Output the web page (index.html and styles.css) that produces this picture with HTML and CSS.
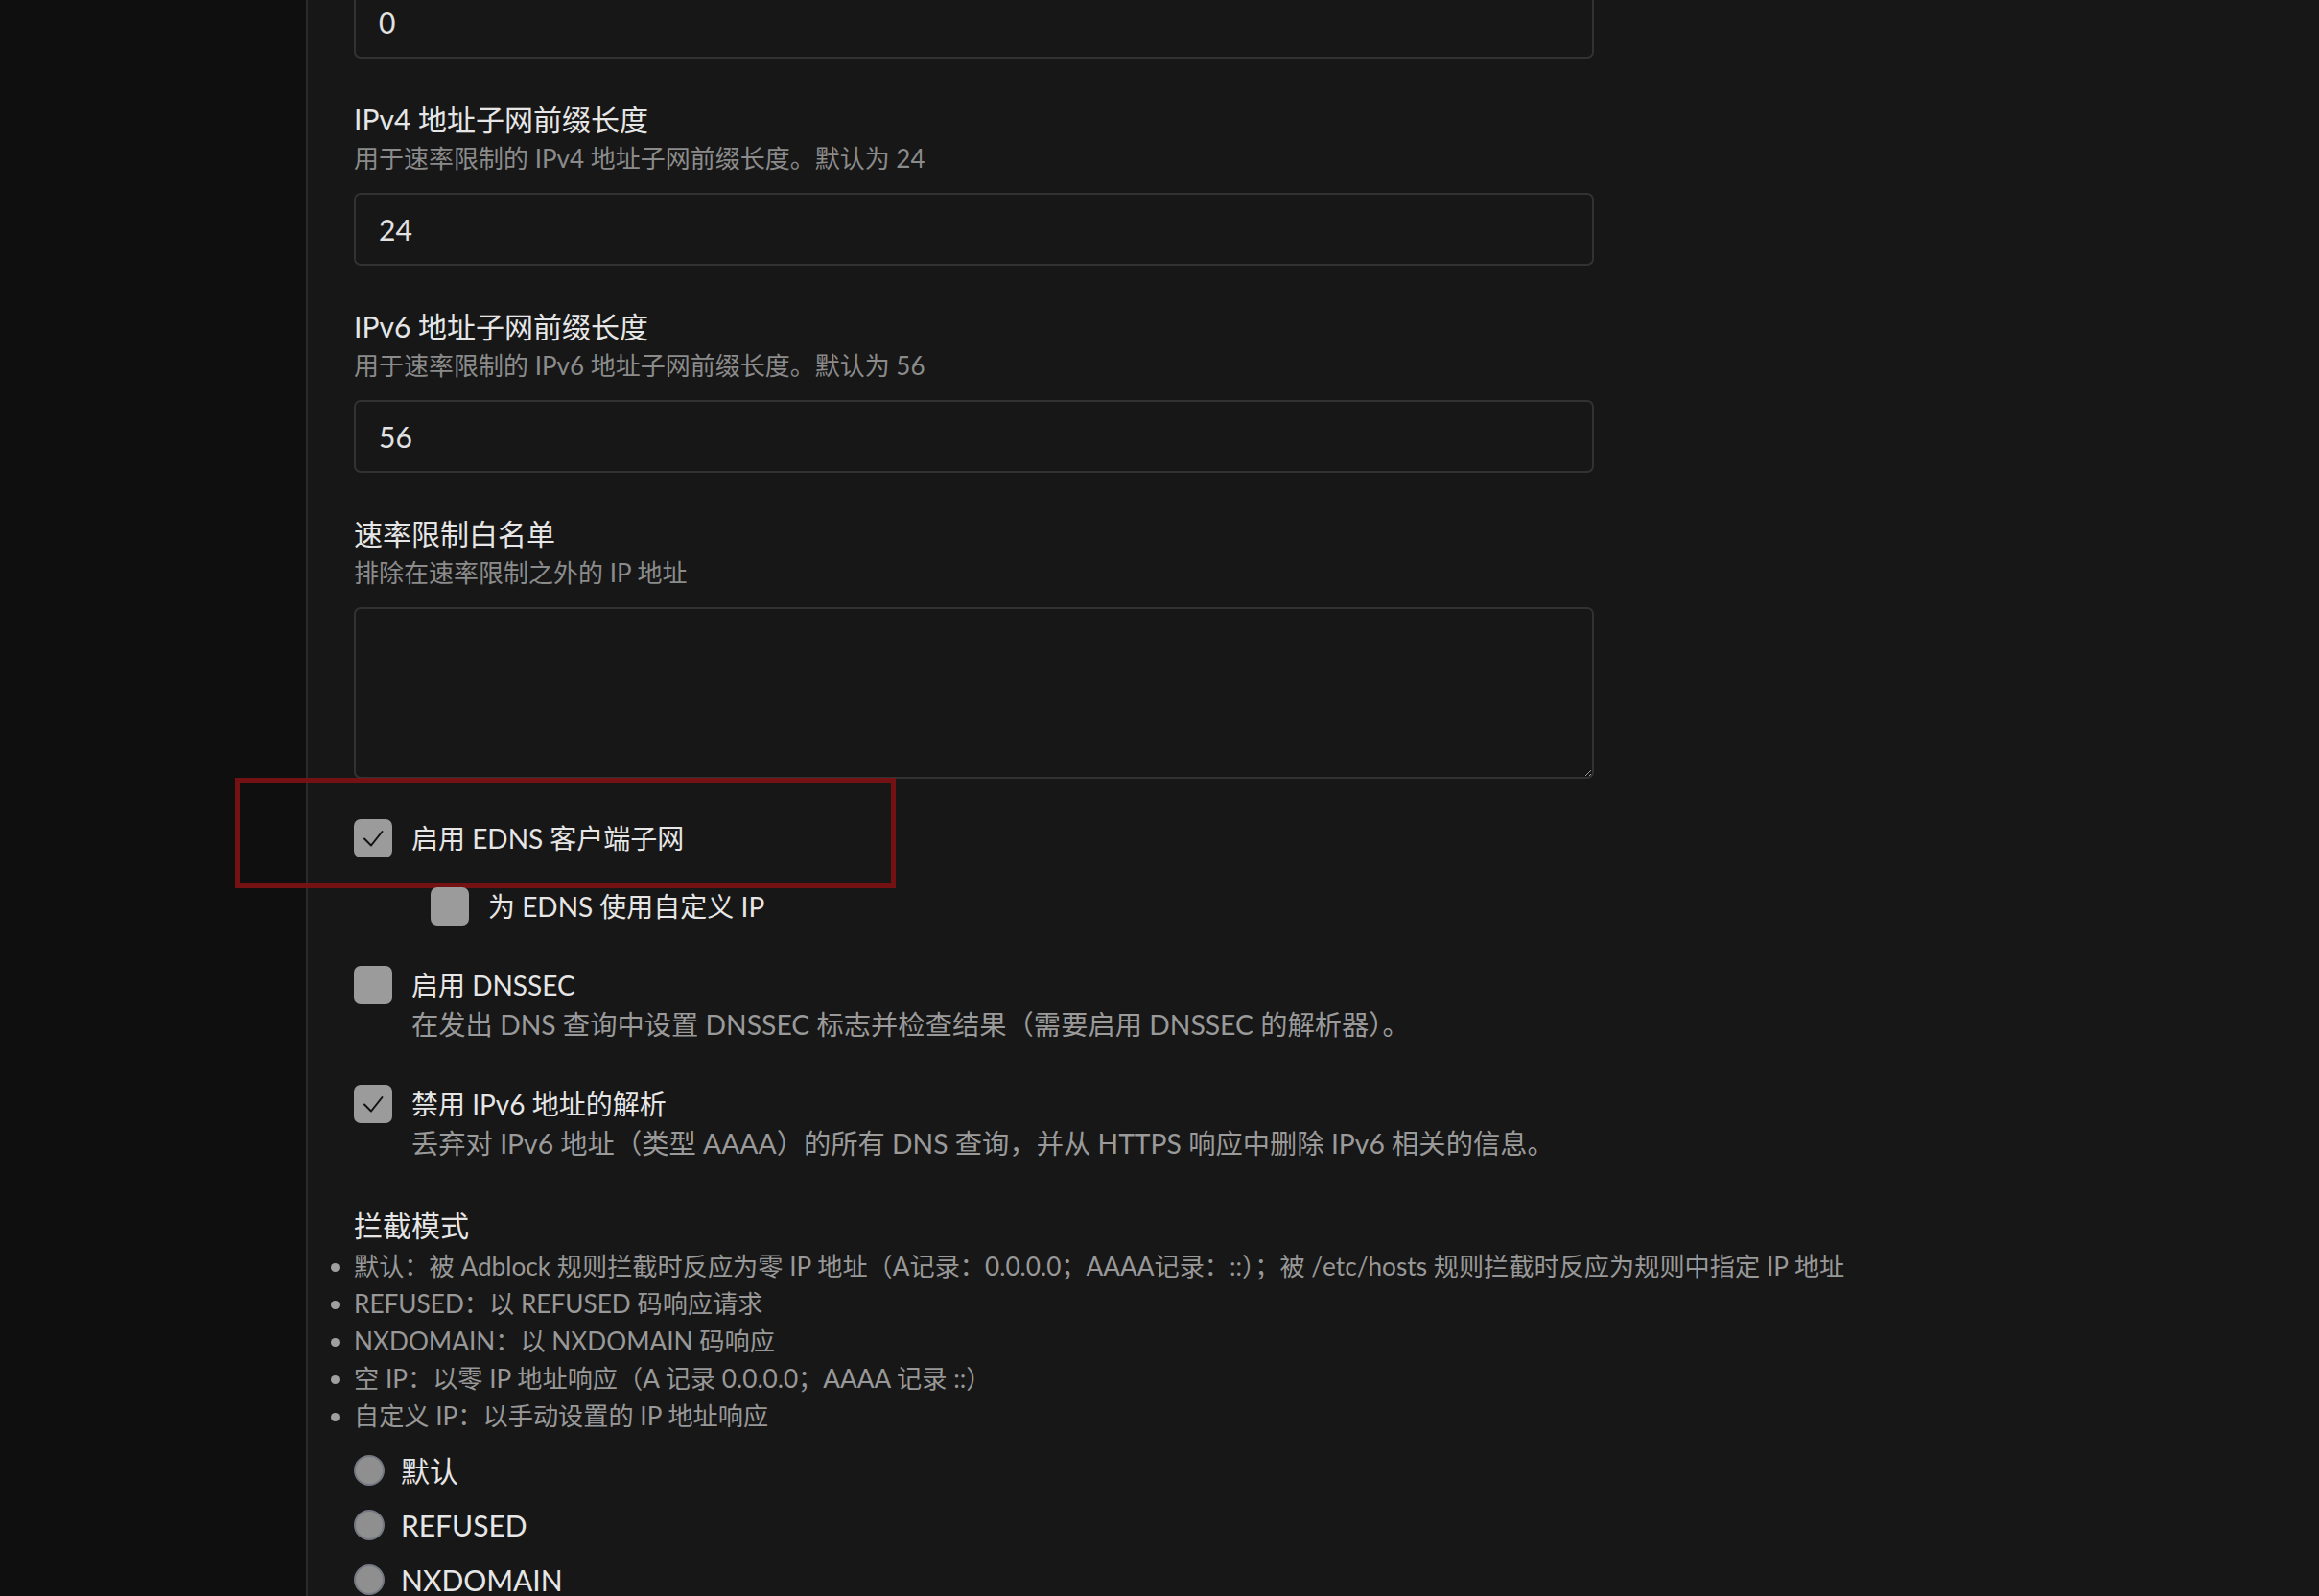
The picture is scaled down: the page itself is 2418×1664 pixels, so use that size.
FILE: index.html
```html
<!DOCTYPE html>
<html lang="zh-CN">
<head>
<meta charset="utf-8">
<title>DNS 设置</title>
<link rel="stylesheet" href="styles.css">
</head>
<body>
<div class="page">
  <aside class="sidebar"></aside>
  <main class="main">
    <div class="form">
      <div class="field first">
        <div class="input">0</div>
      </div>

      <div class="field">
        <div class="label">IPv4 地址子网前缀长度</div>
        <div class="desc">用于速率限制的 IPv4 地址子网前缀长度。默认为 24</div>
        <div class="input">24</div>
      </div>

      <div class="field">
        <div class="label">IPv6 地址子网前缀长度</div>
        <div class="desc">用于速率限制的 IPv6 地址子网前缀长度。默认为 56</div>
        <div class="input">56</div>
      </div>

      <div class="field">
        <div class="label">速率限制白名单</div>
        <div class="desc">排除在速率限制之外的 IP 地址</div>
        <textarea class="textarea"></textarea>
      </div>

      <div class="check-row cb-edns">
        <span class="box checked">
          <svg viewBox="0 0 40 40" width="40" height="40"><path d="M11 20.5 L18 27.5 L29.5 13" fill="none" stroke="#111" stroke-width="2" stroke-linecap="round" stroke-linejoin="round"/></svg>
        </span>
        <div class="check-text">
          <div class="check-label">启用 EDNS 客户端子网</div>
        </div>
        <div class="highlight"></div>
      </div>

      <div class="check-row nested">
        <span class="box"></span>
        <div class="check-text">
          <div class="check-label">为 EDNS 使用自定义 IP</div>
        </div>
      </div>

      <div class="check-row spaced">
        <span class="box"></span>
        <div class="check-text">
          <div class="check-label">启用 DNSSEC</div>
          <div class="check-desc">在发出 DNS 查询中设置 DNSSEC 标志并检查结果（需要启用 DNSSEC 的解析器）。</div>
        </div>
      </div>

      <div class="check-row spaced">
        <span class="box checked">
          <svg viewBox="0 0 40 40" width="40" height="40"><path d="M11 20.5 L18 27.5 L29.5 13" fill="none" stroke="#111" stroke-width="2" stroke-linecap="round" stroke-linejoin="round"/></svg>
        </span>
        <div class="check-text">
          <div class="check-label">禁用 IPv6 地址的解析</div>
          <div class="check-desc">丢弃对 IPv6 地址（类型 AAAA）的所有 DNS 查询，并从 HTTPS 响应中删除 IPv6 相关的信息。</div>
        </div>
      </div>

      <div class="mode">
        <div class="label">拦截模式</div>
        <ul class="mode-list">
          <li>默认：被 Adblock 规则拦截时反应为零 IP 地址（A记录：0.0.0.0；AAAA记录：::）；被 /etc/hosts 规则拦截时反应为规则中指定 IP 地址</li>
          <li>REFUSED：以 REFUSED 码响应请求</li>
          <li>NXDOMAIN：以 NXDOMAIN 码响应</li>
          <li>空 IP：以零 IP 地址响应（A 记录 0.0.0.0；AAAA 记录 ::）</li>
          <li>自定义 IP：以手动设置的 IP 地址响应</li>
        </ul>
        <div class="radios">
          <div class="radio-row"><span class="radio"></span><span class="radio-label">默认</span></div>
          <div class="radio-row"><span class="radio"></span><span class="radio-label">REFUSED</span></div>
          <div class="radio-row"><span class="radio"></span><span class="radio-label">NXDOMAIN</span></div>
        </div>
      </div>
    </div>
  </main>
</div>
</body>
</html>
```
FILE: styles.css
```css
* { box-sizing: border-box; }
html, body {
  margin: 0;
  padding: 0;
  height: 100%;
  overflow: hidden;
  background: #171717;
  font-family: "Lato", "Noto Sans CJK SC", sans-serif;
}
.page {
  display: flex;
  min-height: 1664px;
}
.sidebar {
  width: 321px;
  flex: none;
  background: #0f0f0f;
  border-right: 2px solid #2b2b2b;
}
.main {
  flex: 1;
  background: #171717;
  padding-left: 48px;
}
.form {
  width: 1293px;
  margin-top: -15px;
}
.field { margin-bottom: 42px; }
.label {
  font-size: 30px;
  line-height: 42px;
  color: #e6e6e6;
}
.desc {
  font-size: 26px;
  line-height: 40px;
  color: #8b8b8b;
}
.input {
  margin-top: 16px;
  height: 76px;
  border: 2px solid #323232;
  border-radius: 7px;
  background: #171717;
  padding-left: 24px;
  font-size: 30px;
  line-height: 72px;
  color: #e2e2e2;
}
.first .input { margin-top: 0; }
.textarea {
  display: block;
  margin-top: 16px;
  width: 100%;
  height: 179px;
  border: 2px solid #323232;
  border-radius: 7px;
  background: #171717;
  color: #e2e2e2;
  resize: both;
  color-scheme: dark;
  outline: none;
}
.check-row {
  position: relative;
  display: flex;
  align-items: flex-start;
  gap: 20px;
}
.cb-edns { margin-top: 0; }
.nested { margin-left: 80px; margin-top: 31px; }
.spaced { margin-top: 42px; }
.box {
  flex: none;
  width: 40px;
  height: 40px;
  border-radius: 7px;
  background: #9b9b9b;
  display: block;
}
.box svg { display: block; }
.check-label {
  font-size: 28px;
  line-height: 40px;
  color: #e6e6e6;
}
.check-desc {
  font-size: 28.3px;
  line-height: 42px;
  color: #9a9a9a;
  white-space: nowrap;
}
.highlight {
  position: absolute;
  left: -124px;
  top: -43px;
  width: 689px;
  height: 115px;
  border: 5px solid rgba(125, 18, 20, 0.92);
  pointer-events: none;
}
.mode { margin-top: 43px; }
.mode-list {
  margin: 3px 0 0;
  padding: 0;
  list-style: disc outside;
  font-size: 26.2px;
  line-height: 39px;
  color: #989898;
  white-space: nowrap;
}
.mode-list li::marker { color: #a0a0a0; }
.radios {
  margin-top: 16px;
  display: flex;
  flex-direction: column;
  gap: 15px;
}
.radio-row {
  display: flex;
  align-items: center;
  gap: 17px;
  height: 42px;
}
.radio {
  flex: none;
  width: 32px;
  height: 32px;
  border-radius: 50%;
  background: #8f8f8f;
  border: 2px solid #747883;
}
.radio-label {
  font-size: 30px;
  line-height: 42px;
  color: #e6e6e6;
}
```
